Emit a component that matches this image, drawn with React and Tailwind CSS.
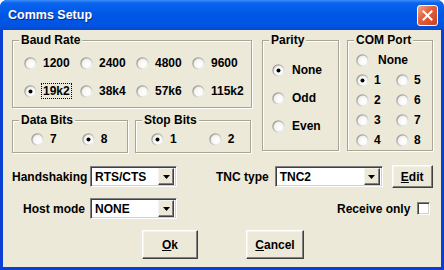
import React from 'react';

const font = { fontFamily: '"Liberation Sans", Arial, sans-serif' };

// Classic radio glyph, sunken circle with optional dot
function RadioDot({ checked }) {
  return (
    <svg width="13" height="13" viewBox="0 0 13 13" className="shrink-0">
      <defs>
        <linearGradient id="rimGrad" x1="0" y1="0" x2="1" y2="1">
          <stop offset="0" stopColor="#8a8a8a" />
          <stop offset="0.55" stopColor="#c8c8c8" />
          <stop offset="1" stopColor="#ffffff" />
        </linearGradient>
        <radialGradient id="fillGrad" cx="0.6" cy="0.6" r="0.6">
          <stop offset="0" stopColor="#ffffff" />
          <stop offset="0.7" stopColor="#f6f6f4" />
          <stop offset="1" stopColor="#dedbd2" />
        </radialGradient>
      </defs>
      <circle cx="6.5" cy="6.5" r="5.6" fill="url(#fillGrad)" stroke="url(#rimGrad)" strokeWidth="1.3" />
      {checked && <circle cx="6.5" cy="6.5" r="2" fill="#000" />}
    </svg>
  );
}

function Radio({ label, checked, focus, gap = 'gap-[6px]' }) {
  return (
    <div className={`flex items-center ${gap}`}>
      <RadioDot checked={checked} />
      <span className={`leading-[14px] ${focus ? 'outline outline-1 outline-dotted outline-black px-[1px] -mx-[1px]' : ''}`}>
        {label}
      </span>
    </div>
  );
}

function Group({ title, className, children }) {
  return (
    <div
      className={`relative border border-[#a8a596] shadow-[1px_1px_0_#ffffff,inset_1px_1px_0_#ffffff] ${className}`}
    >
      <span className="absolute -top-[8px] left-[6px] bg-[#ece9d8] px-[2px] leading-[14px]">{title}</span>
      {children}
    </div>
  );
}

function Combo({ value, width }) {
  return (
    <div
      className={`flex items-center h-[21px] bg-white border border-t-[#808080] border-l-[#808080] border-b-white border-r-white shadow-[inset_1px_1px_0_#404040,inset_-1px_-1px_0_#d4d0c8] ${width}`}
    >
      <span className="flex-1 pl-[4px] leading-[14px]">{value}</span>
      <div className="mr-[2px] flex h-[17px] w-[16px] items-center justify-center bg-[#ece9d8] border border-t-[#f4f3ee] border-l-[#f4f3ee] border-b-[#404040] border-r-[#404040] shadow-[inset_-1px_-1px_0_#808080]">
        <svg width="7" height="4" viewBox="0 0 7 4">
          <path d="M0 0h7L3.5 4z" fill="#000" />
        </svg>
      </div>
    </div>
  );
}

function Button({ children, className }) {
  return (
    <div
      className={`flex items-center justify-center bg-[#ece9d8] border border-t-white border-l-white border-b-[#404040] border-r-[#404040] shadow-[inset_-1px_-1px_0_#808080,inset_1px_1px_0_#f4f3ee] ${className}`}
    >
      {children}
    </div>
  );
}

export default function App() {
  return (
    <div
      className="flex h-[270px] w-[444px] flex-col overflow-hidden rounded-t-[7px] bg-[#0a3fd4] text-[12px] font-bold text-black"
      style={font}
    >
      {/* Title bar */}
      <div className="flex h-[30px] shrink-0 items-center bg-[linear-gradient(to_bottom,#3d8ff9_0%,#0a63ee_10%,#0058e6_45%,#0054e2_85%,#0a48cc_100%)] pl-[8px] pr-[6px]">
        <span className="flex-1 text-[12.5px] font-bold text-white [text-shadow:1px_1px_0_#0a2a8a]">Comms Setup</span>
        <div className="flex h-[21px] w-[21px] items-center justify-center rounded-[3px] border border-white bg-[linear-gradient(135deg,#f3a78b_0%,#e2633f_40%,#c8421c_100%)]">
          <svg width="11" height="11" viewBox="0 0 11 11">
            <path d="M1.5 1.5l8 8M9.5 1.5l-8 8" stroke="#fff" strokeWidth="2" strokeLinecap="square" />
          </svg>
        </div>
      </div>

      {/* Body */}
      <div className="mx-[3px] mb-[3px] flex flex-1 flex-col bg-[#ece9d8] pl-[9px] pt-[10px]">
        <div className="flex items-start">
          <div className="flex w-[240px] flex-col gap-[12px]">
            <Group title="Baud Rate" className="h-[68px] w-[240px]">
              <div className="grid grid-cols-[56px_56px_56px_auto] gap-y-[14px] pl-[11px] pt-[15px]">
                <Radio label="1200" />
                <Radio label="2400" />
                <Radio label="4800" />
                <Radio label="9600" />
                <Radio label="19k2" checked focus />
                <Radio label="38k4" />
                <Radio label="57k6" />
                <Radio label="115k2" />
              </div>
            </Group>
            <div className="flex gap-[7px]">
              <Group title="Data Bits" className="h-[33px] w-[116px]">
                <div className="flex gap-[25px] pl-[18px] pt-[11px]">
                  <Radio label="7" />
                  <Radio label="8" checked />
                </div>
              </Group>
              <Group title="Stop Bits" className="h-[33px] w-[116px]">
                <div className="flex gap-[32px] pl-[15px] pt-[11px]">
                  <Radio label="1" checked />
                  <Radio label="2" />
                </div>
              </Group>
            </div>
          </div>

          <Group title="Parity" className="ml-[10px] h-[111px] w-[77px]">
            <div className="flex flex-col gap-[14px] pl-[9px] pt-[22px]">
              <Radio label="None" checked gap="gap-[7px]" />
              <Radio label="Odd" gap="gap-[7px]" />
              <Radio label="Even" gap="gap-[7px]" />
            </div>
          </Group>

          <Group title="COM Port" className="ml-[8px] h-[111px] w-[86px]">
            <div className="flex flex-col gap-[6px] pl-[8px] pt-[12px]">
              <Radio label="None" gap="gap-[9px]" />
              {[
                ['1', '5', true],
                ['2', '6'],
                ['3', '7'],
                ['4', '8'],
              ].map(([a, b, c]) => (
                <div key={a} className="grid grid-cols-[40px_auto]">
                  <Radio label={a} checked={c} gap="gap-[5px]" />
                  <Radio label={b} gap="gap-[5px]" />
                </div>
              ))}
            </div>
          </Group>
        </div>

        {/* Handshaking / TNC row */}
        <div className="mt-[12px] flex h-[23px] items-center whitespace-nowrap">
          <span className="w-[73px] shrink-0 text-right">Handshaking</span>
          <div className="ml-[5px] shrink-0">
            <Combo value="RTS/CTS" width="w-[87px]" />
          </div>
          <span className="ml-[39px] shrink-0">TNC type</span>
          <div className="ml-[6px] shrink-0">
            <Combo value="TNC2" width="w-[108px]" />
          </div>
          <Button className="ml-[9px] h-[23px] w-[41px] shrink-0">
            <span><span className="underline">E</span>dit</span>
          </Button>
        </div>

        {/* Host mode row */}
        <div className="mt-[10px] flex h-[21px] items-center whitespace-nowrap">
          <span className="w-[73px] shrink-0 text-right">Host mode</span>
          <div className="ml-[5px] shrink-0">
            <Combo value="NONE" width="w-[87px]" />
          </div>
          <span className="ml-[160px] shrink-0">Receive only</span>
          <div className="ml-[7px] h-[13px] w-[13px] shrink-0 bg-white border border-t-[#808080] border-l-[#808080] border-b-white border-r-white shadow-[inset_1px_1px_0_#404040,inset_-1px_-1px_0_#d4d0c8]" />
        </div>

        {/* Buttons */}
        <div className="mt-[11px] flex">
          <Button className="ml-[130px] h-[29px] w-[56px]">
            <span><span className="underline">O</span>k</span>
          </Button>
          <Button className="ml-[48px] h-[29px] w-[58px]">
            <span><span className="underline">C</span>ancel</span>
          </Button>
        </div>
      </div>
    </div>
  );
}
